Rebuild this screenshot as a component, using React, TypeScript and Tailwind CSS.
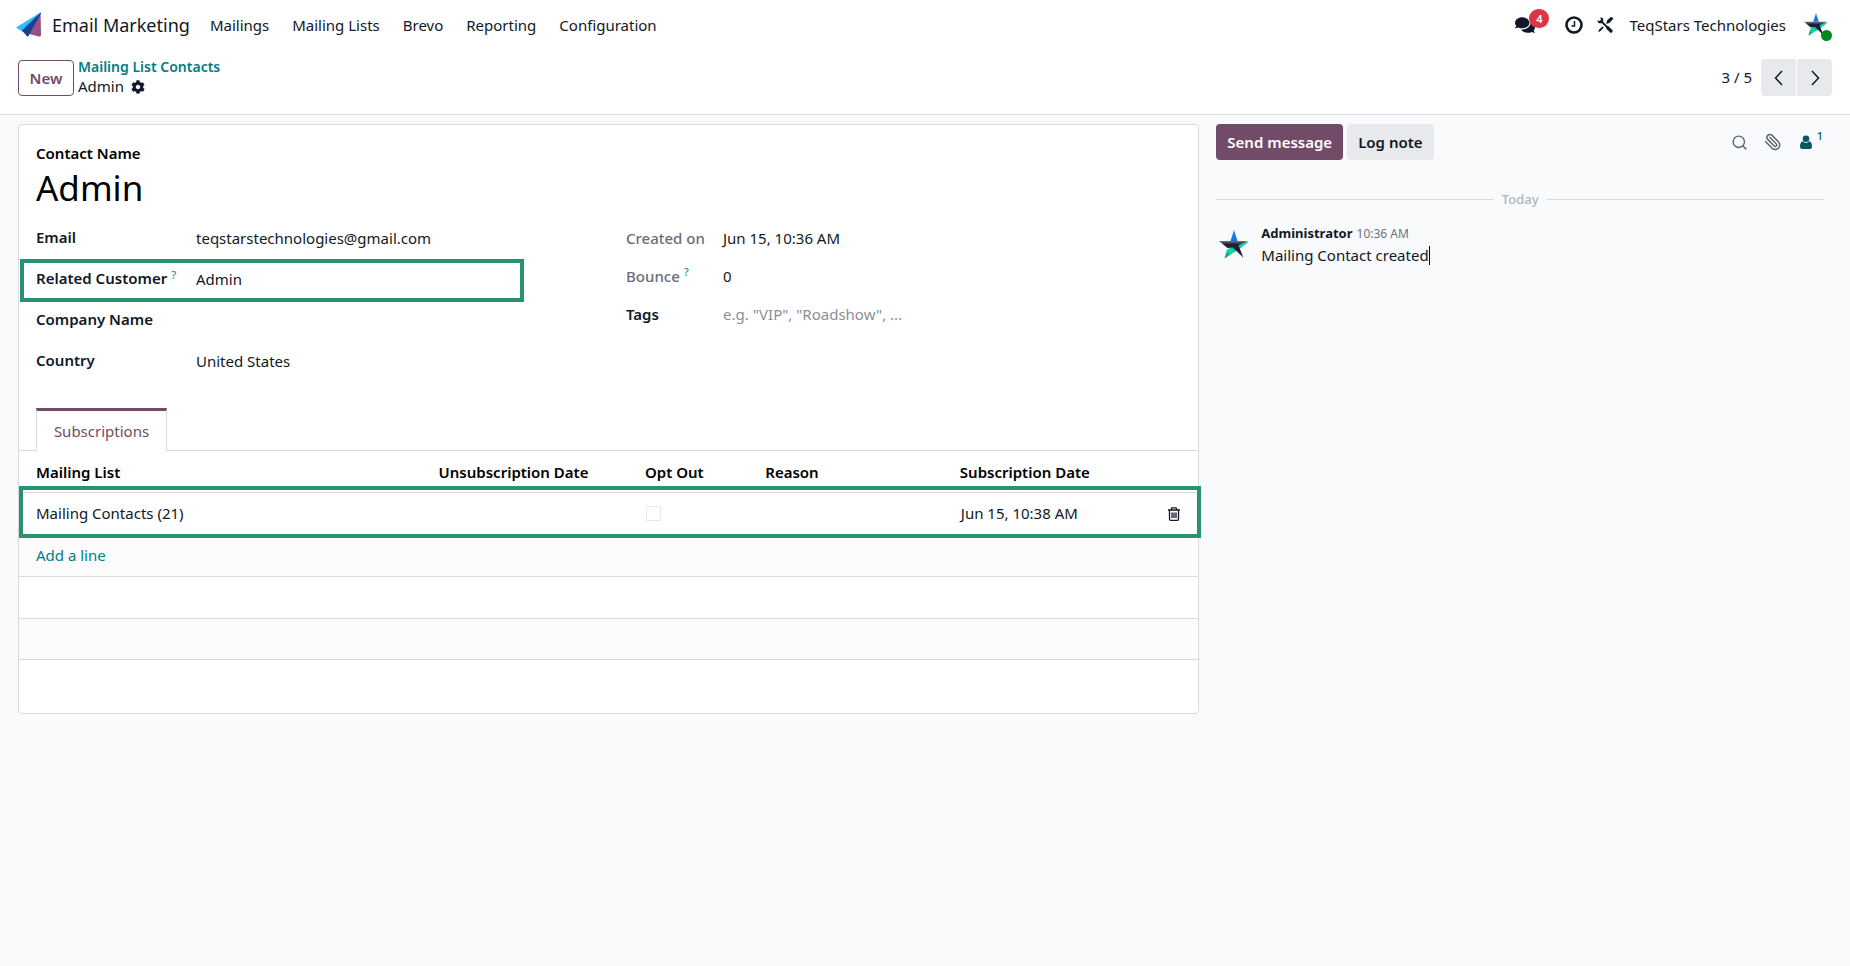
import { useId } from "react";
import type { ReactNode } from "react";
import { FaCog, FaComments } from "react-icons/fa";
import { Paperclip, Search } from "lucide-react";

const menus = ["Mailings", "Mailing Lists", "Brevo", "Reporting", "Configuration"];

function PlaneLogo() {
  return (
    <svg viewBox="0 0 26 26" className="h-[26px] w-[26px]" aria-hidden="true">
      <path d="M0 15.5 24 .8q1-.6 1 .6L7 20Z" fill="#2ebcfa" />
      <path d="M24.6.8 25 23q0 2-2 1.600L13 22Z" fill="#985184" />
      <path d="M24.500 .8 6 18.500 11 24.300q.8.8 1.300 0L25 1.200Z" fill="#1a3f92" />
    </svg>
  );
}

function StarMark({ className }: { className: string }) {
  const id = useId();
  return (
    <svg viewBox="0 0 30 30" className={className} aria-hidden="true">
      <defs>
        <linearGradient id={`${id}b`} x1="0" y1="0" x2="0" y2="1">
          <stop offset="0" stopColor="#0a8dff" />
          <stop offset="1" stopColor="#1c6fe0" />
        </linearGradient>
        <linearGradient id={`${id}g`} x1="1" y1="0" x2="0" y2="1">
          <stop offset="0" stopColor="#0a9c80" />
          <stop offset="0.5" stopColor="#14e0a4" />
          <stop offset="1" stopColor="#1f7a6c" />
        </linearGradient>
        <linearGradient id={`${id}d`} x1="0" y1="0" x2="0" y2="1">
          <stop offset="0" stopColor="#6f737c" />
          <stop offset="0.2" stopColor="#1d1f38" />
          <stop offset="0.75" stopColor="#1d1f38" />
          <stop offset="1" stopColor="#4b4e5c" />
        </linearGradient>
      </defs>
      <path d="M15 0 18.500 11H11.500Z" fill={`url(#${id}b)`} />
      <path d="M30 11.500 20.500 19 17 14Z" fill="#13cf9a" />
      <path d="M8 19.500 15 16 18 20.500 5.500 28.500Z" fill={`url(#${id}g)`} />
      <path d="M0 11H29L19.500 15.200 24.500 28 14 17.500 8.500 18Z" fill={`url(#${id}d)`} />
    </svg>
  );
}

function ToolsIcon() {
  return (
    <svg viewBox="0 0 16 16" className="h-4 w-4" fill="none" stroke="currentColor" aria-hidden="true">
      <path d="M4 4l8 8" strokeWidth="1.800" />
      <path d="M10.800 10.800l3.200 3.200" strokeWidth="3.200" strokeLinecap="round" />
      <path d="M.6 3.200 2.800 4 4 2.800 3.200.6C5.500.2 6.800 1.800 6.200 4L4.500 6.200C2.200 6.800.2 5.500.6 3.200Z" fill="currentColor" stroke="none" />
      <path d="M1 15.200 2.200 12.500 5.500 9.500 6.800 10.800 3.500 13.900Z" fill="currentColor" stroke="none" />
      <path d="M9.500 6.500l2.300-2.300" strokeWidth="1.500" />
      <path d="M11.500 4.500l2.800-2.800" strokeWidth="3.200" strokeLinecap="round" />
    </svg>
  );
}

function PersonIcon() {
  return (
    <svg viewBox="0 0 12 14" className="h-[14px] w-3" fill="currentColor" aria-hidden="true">
      <circle cx="6" cy="3.800" r="3.300" />
      <path d="M2.900 6.300Q4.200 7.900 6 7.900t3.100-1.600Q12 7 12 11.400 12 14 10 14H2q-2 0-2-2.600Q0 7 2.900 6.300Z" />
    </svg>
  );
}

function TrashIcon() {
  return (
    <svg viewBox="0 0 14 14" className="h-[14px] w-[14px]" fill="none" stroke="currentColor" aria-hidden="true">
      <path d="M1 3h12M4.500 3V1.500q0-.7.700-.7h3.600q.7 0 .7.700V3M2.500 3v9q0 1.300 1.200 1.300h6.600q1.200 0 1.200-1.300V3M5 5.500v5.500M7 5.500v5.500M9 5.500v5.500" strokeWidth="1.300" />
    </svg>
  );
}

function Chevron({ d }: { d: string }) {
  return (
    <svg viewBox="0 0 16 16" className="h-4 w-4" fill="none" stroke="currentColor" strokeWidth="1.500" aria-hidden="true">
      <path d={d} />
    </svg>
  );
}

function Help() {
  return <sup className="ml-1 text-[11px] font-medium text-[#1a91a8]">?</sup>;
}

type FieldProps = {
  id: string;
  label: string;
  value?: string;
  placeholder?: string;
  help?: boolean;
  highlight?: boolean;
};

function Field({ id, label, value, placeholder, help, highlight }: FieldProps) {
  return (
    <div className="relative flex h-[41px] items-center">
      {highlight && <div className="absolute top-px -left-4 h-[43px] w-[504px] border-4 border-[#2a9270]" />}
      <label htmlFor={id} className="w-40 shrink-0 font-semibold">
        {label}
        {help && <Help />}
      </label>
      <input
        id={id}
        defaultValue={value}
        placeholder={placeholder}
        className="relative h-8 w-72 bg-transparent outline-none placeholder:text-[#8a8f98]"
      />
    </div>
  );
}

function Info({ label, children, help }: { label: string; children: ReactNode; help?: boolean }) {
  return (
    <div className="flex h-[38px] items-center">
      <span className="w-[97px] shrink-0 font-medium text-[#686e79]">
        {label}
        {help && <Help />}
      </span>
      {children}
    </div>
  );
}

export default function App() {
  return (
    <div className="min-h-screen bg-[#f9fafb] font-['Noto_Sans',sans-serif] text-[15px] leading-[19px] text-[#111827]">
      <header className="border-b border-[#d8dadd] bg-white">
        <nav className="flex h-[50px] items-center pr-[22px] pl-4">
          <PlaneLogo />
          <a href="#app" className="ml-[10px] text-[18px]">Email Marketing</a>
          <div className="ml-5 flex gap-[23px]">
            {menus.map((m) => (
              <a key={m} href="#menu">{m}</a>
            ))}
          </div>
          <div className="ml-auto flex items-center">
            <button aria-label="Messages" className="relative mr-[30px]">
              <FaComments className="h-5 w-5" />
              <span className="absolute -top-[6px] left-[14px] flex h-[19px] w-5 items-center justify-center rounded-full bg-[#dc3545] text-[11px] font-semibold text-white">4</span>
            </button>
            <button aria-label="Activities" className="mr-[14px]">
              <svg viewBox="0 0 18 18" className="h-[18px] w-[18px]" fill="none" stroke="currentColor" aria-hidden="true">
                <circle cx="9" cy="9" r="7.500" strokeWidth="2.600" />
                <path d="M9.500 5v5H6.500" strokeWidth="1.500" />
              </svg>
            </button>
            <button aria-label="Developer tools" className="mr-4"><ToolsIcon /></button>
            <span className="mr-[18px]">TeqStars Technologies</span>
            <span className="relative">
              <StarMark className="h-6 w-6" />
              <span className="absolute -right-1 -bottom-1 h-[11px] w-[11px] rounded-full bg-[#008818]" />
            </span>
          </div>
        </nav>
        <div className="flex h-16 items-start px-[18px] pt-[9px]">
          <button className="mt-px h-9 w-14 rounded border border-[#714b67] font-semibold text-[#714b67]">New</button>
          <div className="ml-1">
            <a href="#contacts" className="block text-[14px] leading-4 font-semibold text-[#017e84]">Mailing List Contacts</a>
            <div className="mt-1 flex items-center gap-[7px] leading-[15px]">
              Admin
              <button aria-label="Actions"><FaCog className="h-[14px] w-[14px]" /></button>
            </div>
          </div>
          <div className="ml-auto flex items-center">
            <span className="mr-[9px]">3 / 5</span>
            <button aria-label="Previous" className="mr-px flex h-[37px] w-[35px] items-center justify-center rounded-l bg-[#e7e9ed]"><Chevron d="M11 1 4.500 8 11 15" /></button>
            <button aria-label="Next" className="flex h-[37px] w-[35px] items-center justify-center rounded-r bg-[#e7e9ed]"><Chevron d="M5 1l6.500 7L5 15" /></button>
          </div>
        </div>
      </header>

      <div className="flex items-start pt-[9px] pr-[26px] pl-[18px]">
        <main className="min-w-0 flex-[1180] rounded border border-[#d8dadd] bg-white">
          <div className="px-[17px] pt-[19px]">
            <label htmlFor="name" className="block font-semibold text-black">Contact Name</label>
            <input id="name" defaultValue="Admin" className="mb-[5px] block h-[49px] w-96 text-[35px] text-black outline-none" />
            <div className="flex">
              <div className="w-[590px]">
                <Field id="email" label="Email" value="teqstarstechnologies@gmail.com" />
                <Field id="customer" label="Related Customer" value="Admin" help highlight />
                <Field id="company" label="Company Name" />
                <Field id="country" label="Country" value="United States" />
              </div>
              <div className="pt-[2px]">
                <Info label="Created on">Jun 15, 10:36 AM</Info>
                <Info label="Bounce" help>0</Info>
                <div className="flex h-[38px] items-center">
                  <label htmlFor="tags" className="w-[97px] font-semibold">Tags</label>
                  <input id="tags" placeholder={'e.g. "VIP", "Roadshow", ...'} className="w-60 outline-none placeholder:text-[#8a8f98]" />
                </div>
              </div>
            </div>
          </div>
          <div role="tablist" className="mt-[27px] flex border-b border-[#d8dadd] px-[17px]">
            <button role="tab" aria-selected="true" className="-mb-px h-[43px] w-[131px] border-x border-t-3 border-x-[#d8dadd] border-t-[#714b67] bg-white text-[#714b67]">Subscriptions</button>
          </div>
          <div className="relative">
            <div className="absolute top-[35px] -right-[3px] left-0 h-[52px] border-4 border-[#2a9270]" />
            <table className="w-full table-fixed text-left">
              <colgroup>
                <col className="w-[34.9%]" />
                <col className="w-[17.5%]" />
                <col className="w-[10.2%]" />
                <col className="w-[16.5%]" />
                <col />
                <col className="w-12" />
              </colgroup>
              <thead>
                <tr className="h-[41px] border-b border-[#d8dadd] text-black *:pt-[2px]">
                  <th className="pl-[17px] font-semibold">Mailing List</th>
                  <th className="pl-2 font-semibold">Unsubscription Date</th>
                  <th className="pl-2 font-semibold">Opt Out</th>
                  <th className="pl-2 font-semibold">Reason</th>
                  <th className="pl-2 font-semibold">Subscription Date</th>
                  <th aria-label="Delete" />
                </tr>
              </thead>
              <tbody>
                <tr className="h-[43px] border-b border-[#d8dadd]">
                  <td className="pl-[17px]">Mailing Contacts (21)</td>
                  <td />
                  <td className="pl-[9px]">
                    <input type="checkbox" aria-label="Opt Out" className="block h-[15px] w-[15px] appearance-none border border-[#e7e9ed] bg-white" />
                  </td>
                  <td />
                  <td className="pl-[9px]">Jun 15, 10:38 AM</td>
                  <td className="pl-[17px]"><button aria-label="Delete row" className="relative block"><TrashIcon /></button></td>
                </tr>
                <tr className="h-[41px] border-b border-[#d8dadd] bg-[#fcfcfc]">
                  <td colSpan={6} className="pl-[17px]"><a href="#add" className="text-[#017e84]">Add a line</a></td>
                </tr>
                <tr className="h-[42px] border-b border-[#d8dadd]"><td colSpan={6} /></tr>
                <tr className="h-[41px] border-b border-[#d8dadd] bg-[#fcfcfc]"><td colSpan={6} /></tr>
              </tbody>
            </table>
            <div className="h-[53px]" />
          </div>
        </main>

        <aside className="ml-[17px] min-w-0 flex-[608]">
          <div className="flex items-center">
            <button className="h-9 rounded bg-[#714b67] px-[11px] font-semibold text-white">Send message</button>
            <button className="ml-1 h-9 rounded bg-[#e7e9ed] px-[11px] font-semibold">Log note</button>
            <button aria-label="Search messages" className="ml-auto text-[#5f6673]"><Search className="h-[17px] w-[17px]" /></button>
            <button aria-label="Attachments" className="ml-4 text-[#5f6673]"><Paperclip className="h-[18px] w-[18px] -scale-x-100" /></button>
            <button aria-label="Followers" className="mr-px ml-[18px] flex items-center gap-[5px] text-[#015a60]"><PersonIcon /><span className="mb-3 text-[11px] leading-3 font-medium">1</span></button>
          </div>
          <div className="mt-[30px] flex items-center gap-2 text-[13px] font-medium text-[#b0b4bb]">
            <hr className="grow border-[#d8dadd]" />Today<hr className="grow border-[#d8dadd]" />
          </div>
          <div className="mt-[15px] flex">
            <StarMark className="mt-[6px] ml-[3px] h-[30px] w-[30px]" />
            <div className="ml-3">
              <div className="flex items-baseline gap-1"><span className="text-[13px] font-bold">Administrator</span><span className="text-[12px] text-[#6b7280]">10:36 AM</span></div>
              <p className="mt-[3px] border-r border-black">Mailing Contact created</p>
            </div>
          </div>
        </aside>
      </div>
    </div>
  );
}
